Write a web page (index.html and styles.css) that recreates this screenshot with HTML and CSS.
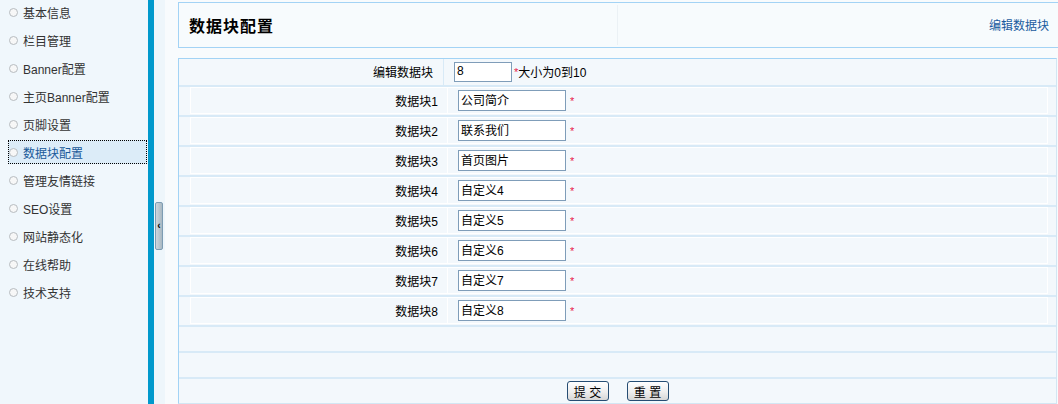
FILE: index.html
```html
<!DOCTYPE html>
<html lang="zh-CN">
<head>
  <meta charset="UTF-8">
  <title>数据块配置</title>
  <link rel="stylesheet" href="styles.css">
</head>
<body>
  <div class="layout">
    <aside class="sidebar">
      <ul class="menu">
        <li><a href="#">基本信息</a></li>
        <li><a href="#">栏目管理</a></li>
        <li><a href="#">Banner配置</a></li>
        <li><a href="#">主页Banner配置</a></li>
        <li><a href="#">页脚设置</a></li>
        <li><a href="#" class="active">数据块配置</a></li>
        <li><a href="#">管理友情链接</a></li>
        <li><a href="#">SEO设置</a></li>
        <li><a href="#">网站静态化</a></li>
        <li><a href="#">在线帮助</a></li>
        <li><a href="#">技术支持</a></li>
      </ul>
    </aside>
    <div class="bar"></div>
    <div class="splitter"><span class="toggle">&lsaquo;</span></div>

    <main class="main">
      <div class="page-head">
        <h1>数据块配置</h1>
        <div class="head-tools"><a href="#">编辑数据块</a></div>
      </div>

      <form class="panel" id="blockForm">
        <div class="row-first">
          <div class="label">编辑数据块</div>
          <div class="value">
            <input type="text" class="field-sm" name="count" value="8">
            <span class="req">*</span><span class="hint">大小为0到10</span>
          </div>
        </div>

        <div class="row">
          <div class="label">数据块1</div>
          <div class="value"><input type="text" class="field" name="b1" value="公司简介"><span class="req">*</span></div>
        </div>
        <div class="row">
          <div class="label">数据块2</div>
          <div class="value"><input type="text" class="field" name="b2" value="联系我们"><span class="req">*</span></div>
        </div>
        <div class="row">
          <div class="label">数据块3</div>
          <div class="value"><input type="text" class="field" name="b3" value="首页图片"><span class="req">*</span></div>
        </div>
        <div class="row">
          <div class="label">数据块4</div>
          <div class="value"><input type="text" class="field" name="b4" value="自定义4"><span class="req">*</span></div>
        </div>
        <div class="row">
          <div class="label">数据块5</div>
          <div class="value"><input type="text" class="field" name="b5" value="自定义5"><span class="req">*</span></div>
        </div>
        <div class="row">
          <div class="label">数据块6</div>
          <div class="value"><input type="text" class="field" name="b6" value="自定义6"><span class="req">*</span></div>
        </div>
        <div class="row">
          <div class="label">数据块7</div>
          <div class="value"><input type="text" class="field" name="b7" value="自定义7"><span class="req">*</span></div>
        </div>
        <div class="row">
          <div class="label">数据块8</div>
          <div class="value"><input type="text" class="field" name="b8" value="自定义8"><span class="req">*</span></div>
        </div>

        <div class="row-blank"></div>
        <div class="row-blank"></div>

        <div class="actions">
          <button type="submit" class="btn">提 交</button>
          <button type="reset" class="btn">重 置</button>
        </div>
      </form>
    </main>
  </div>
</body>
</html>
```

FILE: styles.css
```css
* {
  box-sizing: border-box;
}
html, body {
  margin: 0;
  height: 100%;
}
body {
  font: 12px "Liberation Sans", "Noto Sans CJK SC", sans-serif;
  color: #000;
  background: #f8fbfd;
  overflow: hidden;
}
.layout {
  display: flex;
  height: 404px;
}

/* left menu */
.sidebar {
  width: 148px;
  flex: none;
  background: #f0f7fc;
}
.menu {
  list-style: none;
  margin: -2px 0 0;
  padding: 0;
}
.menu li {
  height: 28px;
  display: flex;
  align-items: center;
  padding-left: 8px;
}
.menu a {
  display: flex;
  align-items: center;
  width: 139px;
  height: 24px;
  border: 1px dotted transparent;
  color: #333;
  text-decoration: none;
}
.menu a::before {
  content: "";
  width: 7px;
  height: 7px;
  margin-right: 5px;
  border: 1px solid #b7bcc0;
  border-radius: 50%;
  background: #f7f7f7;
}
.menu a.active {
  border-color: #000;
  background: #dcecf8;
  color: #1a5a9a;
}

.bar {
  width: 6px;
  flex: none;
  background: #0099cc;
}
.splitter {
  width: 11px;
  flex: none;
  background: #eef6fb;
  padding: 202px 0 0 1px;
}
.toggle {
  display: flex;
  align-items: center;
  justify-content: center;
  width: 8px;
  height: 48px;
  border: 1px solid #7d9cb3;
  border-radius: 2px;
  background: linear-gradient(to right, #ccd6dd, #a9b8c2);
  font-size: 10px;
  font-weight: bold;
  line-height: 1;
}

/* content */
.main {
  flex: 1;
  padding-left: 13px;
  background: #f8fbfd;
}
.page-head {
  display: flex;
  height: 46px;
  margin-top: 2px;
  padding: 2px 0;
  border: 1px solid #a3d3f5;
  border-right: 0;
  background: #f7fbfd;
}
.page-head h1 {
  display: flex;
  align-items: center;
  width: 439px;
  margin: 0;
  padding: 0 0 1px 10px;
  border-right: 1px solid #ebf1f5;
  font-size: 16px;
  font-weight: bold;
  letter-spacing: 1px;
}
.head-tools {
  flex: 1;
  display: flex;
  align-items: center;
  justify-content: flex-end;
  padding: 0 9px 1px 0;
}
.head-tools a {
  color: #1b5c9f;
  text-decoration: none;
}

.panel {
  margin: 10px 1px 0 0;
  border: 1px solid #a3d3f5;
  border-right-color: #d3e6f3;
  border-bottom-color: #d3e6f3;
  background: #f3f8fc;
}
.row-first {
  display: flex;
  height: 28px;
  border-bottom: 2px solid #d8eaf7;
}
.row-first .label {
  display: flex;
  align-items: center;
  justify-content: flex-end;
  width: 265px;
  padding: 0 10px 1px 0;
  border-right: 1px solid #d8eaf7;
}
.row-first .value {
  display: flex;
  align-items: center;
  padding-left: 10px;
}
.row {
  display: flex;
  height: 30px;
  padding: 0 8px 1px 11px;
  border-bottom: 2px solid #d8eaf7;
}
.row .label {
  display: flex;
  align-items: center;
  justify-content: flex-end;
  width: 258px;
  padding: 0 9px 1px 0;
  border: 1px solid #fff;
}
.row .value {
  flex: 1;
  display: flex;
  align-items: center;
  padding-left: 10px;
  border: 1px solid #fff;
  border-left: 0;
}
.row-blank {
  height: 26px;
  border-bottom: 2px solid #d8eaf7;
}

.field-sm, .field {
  border: 1px solid #7f9db9;
  background: #fff;
  padding: 0 2px 2px;
  font: 12px "Liberation Sans", "Noto Sans CJK SC", sans-serif;
  color: #000;
}
.field-sm {
  width: 58px;
  height: 20px;
}
.field {
  width: 108px;
  height: 21px;
}
.req {
  color: #e8174a;
  margin: 0 0 0 4px;
  font-size: 11px;
}
.row-first .req {
  margin-left: 2px;
}
.hint {
  padding-bottom: 1px;
}

.actions {
  display: flex;
  align-items: center;
  justify-content: center;
  gap: 18px;
  height: 24px;
}
.btn {
  width: 42px;
  height: 20px;
  padding: 0;
  border: 1px solid #264d73;
  border-radius: 3px;
  background: linear-gradient(#ffffff, #eeeeee 55%, #d6d6d6);
  font: 12px "Liberation Sans", "Noto Sans CJK SC", sans-serif;
  color: #000;
  cursor: pointer;
}
```
